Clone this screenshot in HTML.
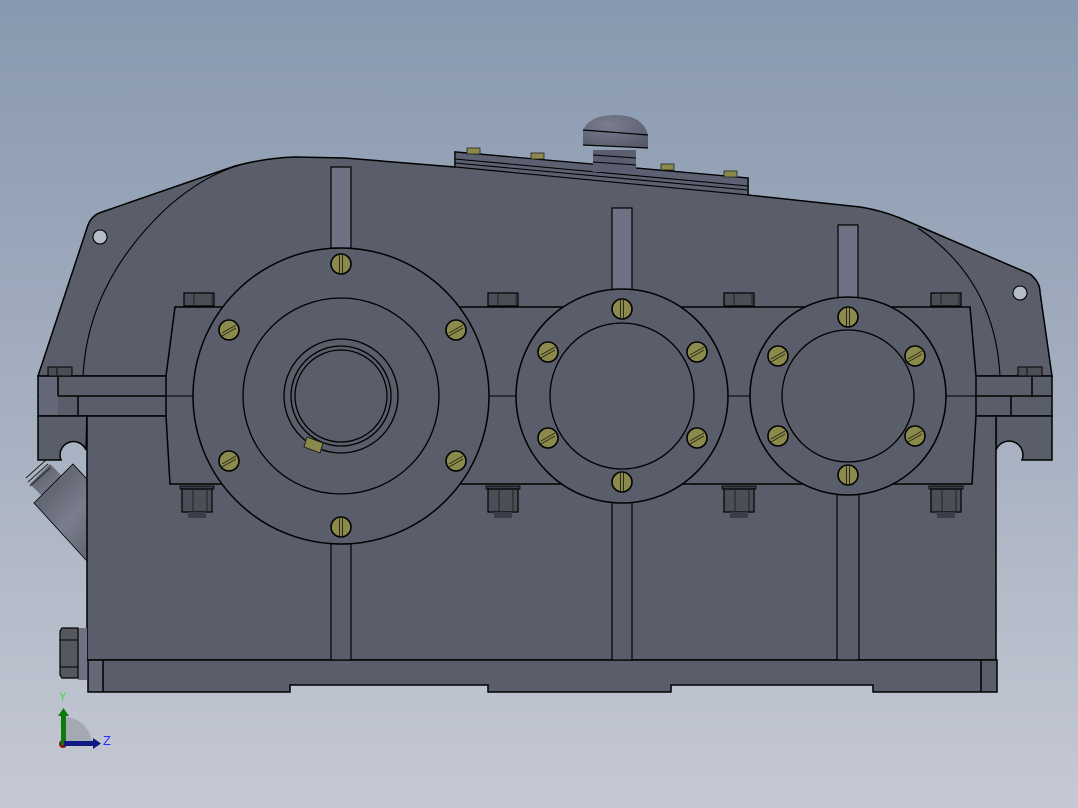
<!DOCTYPE html>
<html><head><meta charset="utf-8"><style>html,body{margin:0;padding:0;width:1078px;height:808px;overflow:hidden}svg{display:block}</style></head>
<body>
<svg width="1078" height="808" viewBox="0 0 1078 808" xmlns="http://www.w3.org/2000/svg">
<defs>
<linearGradient id="bg" x1="0" y1="0" x2="0" y2="1">
<stop offset="0" stop-color="#8899af"/><stop offset="0.5" stop-color="#a5afc0"/><stop offset="1" stop-color="#c5c9d3"/></linearGradient>
<linearGradient id="pipe" x1="0" y1="0" x2="1" y2="1"><stop offset="0" stop-color="#4e525e"/><stop offset="0.5" stop-color="#7a7e8c"/><stop offset="1" stop-color="#50545f"/></linearGradient>
<radialGradient id="dome" cx="0.4" cy="0.3" r="0.8"><stop offset="0" stop-color="#7a7e90"/><stop offset="1" stop-color="#555968"/></radialGradient>
<g id="scr"><circle r="10" fill="#8b8a4c" stroke="#000" stroke-width="1.6"/><path d="M-7,3 L7,-5 M-7,6 L7,-2" stroke="#2a2a18" stroke-width="1"/></g>
<g id="scrv"><circle r="10" fill="#8b8a4c" stroke="#000" stroke-width="1.6"/><path d="M-1.5,-9 V9 M1.5,-9 V9" stroke="#2a2a18" stroke-width="1"/></g>
<g id="hexT"><rect x="-15" y="-7" width="30" height="13" fill="#4b4e56" stroke="#000" stroke-width="1.2"/><line x1="-5" y1="-7" x2="-5" y2="6" stroke="#222"/><line x1="13" y1="-7" x2="13" y2="6" stroke="#222"/></g>
<g id="hexB"><rect x="-17" y="0" width="34" height="3" fill="#3c3f47" stroke="#000" stroke-width="0.8"/><rect x="-15" y="3" width="30" height="23" fill="#4b4e56" stroke="#000" stroke-width="1.2"/><line x1="-4" y1="3" x2="-4" y2="26" stroke="#222"/><line x1="10" y1="3" x2="10" y2="26" stroke="#222"/><rect x="-9" y="26" width="18" height="6" fill="#3c3f47"/></g>
</defs>
<rect width="1078" height="808" fill="url(#bg)"/>

<g>
<polygon points="30,484 50,464 80,494 60,514" fill="url(#pipe)"/>
<polygon points="34,503 73,464 120,515 86,560" fill="url(#pipe)" stroke="#000" stroke-width="0.8"/>
<path d="M26,478 L46,460 M28,482 L48,464 M30,486 L50,468" stroke="#222" stroke-width="1"/>
</g>

<g stroke="#000" stroke-width="1.5">
<path d="M38,376 L88,225 Q92,215 102,212 L235,166 Q265,158 295,157 L345,158 L455,167 L455,152 L748,178 L748,195 L860,207 Q880,210 900,218 L1030,274 Q1040,282 1040,292 L1052,376 Z" fill="#5a5e6b"/>
<path d="M83,376 Q88,280 170,205 Q205,175 240,165" fill="none" stroke-width="1.1"/>
<path d="M1000,376 Q995,280 918,228" fill="none" stroke-width="1.1"/>
<circle cx="100" cy="237" r="7" fill="#b4bcca" stroke-width="1.1"/>
<circle cx="1020" cy="293" r="7" fill="#b4bcca" stroke-width="1.1"/>

<path d="M455,152 L748,178 L748,195 L455,167 Z" fill="#5c6070" stroke-width="1.2"/>
<path d="M455,159 L748,186 M455,163 L748,190" stroke-width="1.1"/>
</g>
<g fill="#8b8a4c" stroke="#222" stroke-width="0.8">
<rect x="467" y="148" width="13" height="6"/><rect x="531" y="153" width="13" height="6"/><rect x="661" y="164" width="13" height="6"/><rect x="724" y="171" width="13" height="6"/></g>
<rect x="593" y="150" width="43" height="22" fill="#5a5e6e"/>
<path d="M593,155 L636,158 M593,162 L636,165" stroke="#000"/>
<path d="M583,130 Q590,115 615,115 Q643,115 648,135 L648,148 L583,145 Z" fill="url(#dome)"/>
<path d="M583,130 L648,135 M583,145 L648,148" stroke="#000" stroke-width="1.2"/>

<g stroke="#000" stroke-width="1.5">
<rect x="38" y="376" width="1014" height="40" fill="#5a5e6b"/>
<line x1="38" y1="396" x2="1052" y2="396"/>
<rect x="39" y="377" width="19" height="38" fill="#646878" stroke="none"/>
<line x1="58" y1="376" x2="58" y2="396"/><line x1="78" y1="396" x2="78" y2="416"/>
<line x1="1032" y1="376" x2="1032" y2="396"/><line x1="1011" y1="396" x2="1011" y2="416"/>
<path d="M38,416 L38,460 L61,460 A13,13 0 1 1 86,450 L87,416 Z" fill="#5a5e6b"/>
<path d="M1052,416 L1052,460 L1022,460 A13,13 0 1 0 996,450 L996,416 Z" fill="#5a5e6b"/>
<rect x="48" y="367" width="24" height="9" fill="#4b4e56" stroke-width="1"/><line x1="57" y1="367" x2="57" y2="376" stroke="#222"/>
<rect x="1018" y="367" width="24" height="9" fill="#4b4e56" stroke-width="1"/><line x1="1027" y1="367" x2="1027" y2="376" stroke="#222"/>

<rect x="87" y="416" width="909" height="244" fill="#5a5e6b"/>
<path d="M88,660 L997,660 L997,692 L873,692 L873,685 L671,685 L671,692 L488,692 L488,685 L290,685 L290,692 L88,692 Z" fill="#5a5e6b"/>
<rect x="89" y="661" width="14" height="30" fill="#646878" stroke="none"/>
<line x1="103" y1="660" x2="103" y2="692"/>
<line x1="981" y1="660" x2="981" y2="692"/>
<rect x="78" y="628" width="9" height="52" fill="#6e7282" stroke="none"/>
<path d="M62,628 L78,628 L78,678 L62,678 L60,675 L60,631 Z" fill="#55585f" stroke-width="1.2"/>
<path d="M60,640 L78,640 M60,667 L78,667" stroke-width="1"/>

<path d="M175,307 L970,307 L976,376 L976,416 L972,484 L170,484 L166,416 L166,376 Z" fill="#5a5e6b"/>
<path d="M490,396 L516,396 M728,396 L750,396 M946,396 L976,396 M166,396 L193,396" stroke-width="1.1"/>

<g fill="#6e7284" stroke-width="1.2">
<rect x="331" y="167" width="20" height="81"/>
<rect x="612" y="208" width="20" height="82"/>
<rect x="838" y="225" width="20" height="73"/>
</g>
<g fill="#5a5e6b" stroke-width="1.2">
<rect x="331" y="544" width="20" height="116"/>
<rect x="612" y="502" width="20" height="158"/>
<rect x="837" y="493" width="22" height="167"/>
</g>
</g>

<use href="#hexT" x="199" y="300"/><use href="#hexT" x="503" y="300"/><use href="#hexT" x="739" y="300"/><use href="#hexT" x="946" y="300"/>
<use href="#hexB" x="197" y="486"/><use href="#hexB" x="503" y="486"/><use href="#hexB" x="739" y="486"/><use href="#hexB" x="946" y="486"/>

<g stroke="#000" stroke-width="1.3">
<circle cx="341" cy="396" r="148" fill="#5a5e6b" stroke-width="1.5"/>
<circle cx="341" cy="396" r="98" fill="none"/>
<circle cx="341" cy="396" r="57" fill="none"/>
<circle cx="341" cy="396" r="50" fill="none"/>
<circle cx="341" cy="396" r="46" fill="none"/>
<polygon points="307,437 323,443 320,453 304,447" fill="#8b8a4c" stroke="#222" stroke-width="1"/>
<ellipse cx="622" cy="396" rx="106" ry="107" fill="#5a5e6b" stroke-width="1.5"/>
<ellipse cx="622" cy="396" rx="72" ry="73" fill="none"/>
<ellipse cx="848" cy="396" rx="98" ry="99" fill="#5a5e6b" stroke-width="1.5"/>
<ellipse cx="848" cy="396" rx="66" ry="66" fill="none"/>
</g>

<use href="#scrv" x="341" y="264"/><use href="#scr" x="229" y="330"/><use href="#scr" x="456" y="330"/>
<use href="#scr" x="229" y="461"/><use href="#scr" x="456" y="461"/><use href="#scrv" x="341" y="527"/>
<use href="#scrv" x="622" y="309"/><use href="#scr" x="548" y="352"/><use href="#scr" x="697" y="352"/>
<use href="#scr" x="548" y="438"/><use href="#scr" x="697" y="438"/><use href="#scrv" x="622" y="482"/>
<use href="#scrv" x="848" y="317"/><use href="#scr" x="778" y="356"/><use href="#scr" x="915" y="356"/>
<use href="#scr" x="778" y="436"/><use href="#scr" x="915" y="436"/><use href="#scrv" x="848" y="475"/>

<path d="M64,745 L64,717 A28,28 0 0 1 92,745 Z" fill="#9ea2ab" opacity="0.8"/>
<circle cx="63" cy="744" r="4" fill="#8a1010"/>
<rect x="61" y="715" width="5" height="30" fill="#0c7a0c"/>
<polygon points="58,716 63.5,708 69,716" fill="#0c7a0c"/>
<rect x="64" y="741" width="30" height="5" fill="#101a80"/>
<polygon points="93,738 101,743.5 93,749" fill="#101a80"/>
<text x="59" y="700" font-family="Liberation Sans, sans-serif" font-size="11" fill="#30e030">Y</text>
<text x="103" y="745" font-family="Liberation Sans, sans-serif" font-size="13" fill="#2030ff">Z</text>
</svg>
</body></html>
